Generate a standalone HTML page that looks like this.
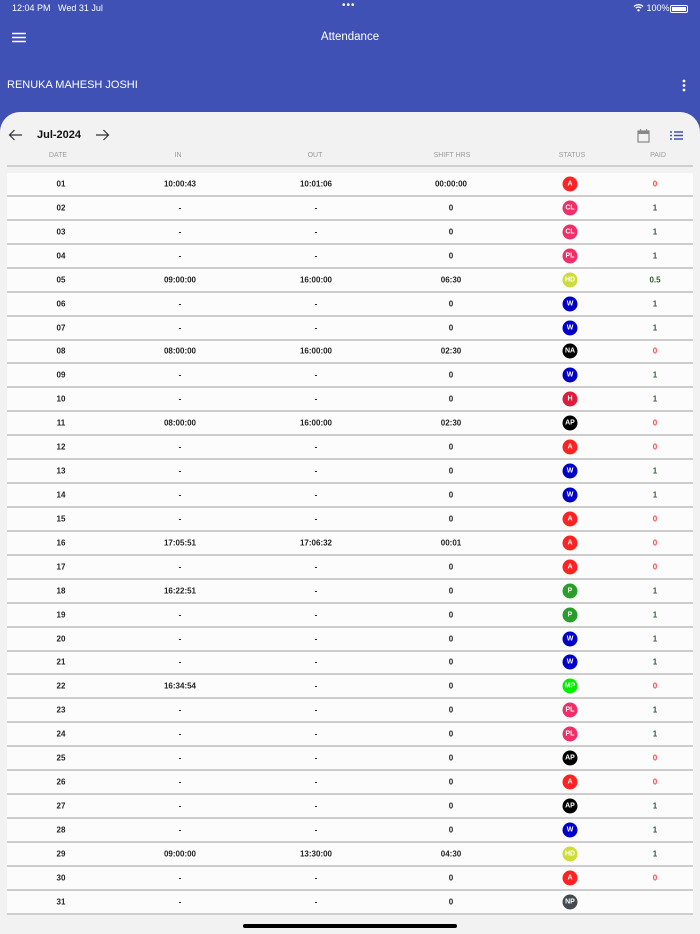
<!DOCTYPE html>
<html><head><meta charset="utf-8">
<style>
*{margin:0;padding:0;box-sizing:border-box}
body{width:700px;height:934px;overflow:hidden;background:#3f51b5;font-family:"Liberation Sans",sans-serif;position:relative}
.sb{position:absolute;top:3px;color:#fff;font-size:9px}
.card{position:absolute;left:0;top:112px;width:700px;height:822px;background:#f2f2f2;border-radius:20px 20px 0 0}
.hd{position:absolute;top:152px;font-size:7px;color:#999;letter-spacing:0;transform:translateX(-50%)}
.hline{position:absolute;left:7px;width:686px;top:165px;height:2px;background:#cfcfcf}
.rows{position:absolute;left:7px;top:173px;width:686px}
.r{height:23.93px;border-bottom:2px solid #cdcdcd;background:#fcfcfc;position:relative;font-size:8px;font-weight:bold;color:#222}
.r span{position:absolute;top:50%;transform:translate(-50%,-50%)}
.b{width:15px;height:15px;border-radius:50%;color:#fff;font-size:7px;display:flex;align-items:center;justify-content:center}
.z{color:#f44}.o{color:#2f5f2f}
</style></head><body>
<div class="sb" style="left:12px">12:04 PM&nbsp;&nbsp; Wed 31 Jul</div>
<div class="sb" style="left:342px;top:0;font-size:10px;letter-spacing:1px">•••</div>
<div class="sb" style="left:633px">
<svg width="11" height="9" viewBox="0 0 11 9" style="vertical-align:-1px"><path d="M1 3.5a6.5 6.5 0 0 1 9 0M2.7 5.2a4 4 0 0 1 5.6 0" stroke="#fff" stroke-width="1.3" fill="none"/><circle cx="5.5" cy="7.3" r="1.2" fill="#fff"/></svg> 100%</div>
<div style="position:absolute;left:670px;top:5px;width:18px;height:8px;border:1px solid #fff;border-radius:2px;padding:1px"><div style="background:#fff;width:100%;height:100%"></div></div>
<svg style="position:absolute;left:12px;top:32px" width="14" height="11"><path d="M0 1.5h14M0 5.5h14M0 9.5h14" stroke="#fff" stroke-width="1.6"/></svg>
<div style="position:absolute;left:0;width:700px;top:31px;text-align:center;color:#fff;font-size:11.5px">Attendance</div>
<div style="position:absolute;left:7px;top:79px;color:#fff;font-size:11px">RENUKA MAHESH JOSHI</div>
<svg style="position:absolute;left:682px;top:79px" width="4" height="13"><circle cx="2" cy="2" r="1.4" fill="#fff"/><circle cx="2" cy="6.5" r="1.4" fill="#fff"/><circle cx="2" cy="11" r="1.4" fill="#fff"/></svg>
<div class="card"></div>
<svg style="position:absolute;left:8px;top:129px" width="14" height="12"><path d="M14 6H1.5M6.5 1 1.5 6l5 5" stroke="#333" stroke-width="1.2" fill="none"/></svg>
<div style="position:absolute;left:37px;top:129px;font-size:11px;font-weight:bold;color:#111">Jul-2024</div>
<svg style="position:absolute;left:96px;top:129px" width="14" height="12"><path d="M0 6h12.5M7.5 1l5 5-5 5" stroke="#333" stroke-width="1.2" fill="none"/></svg>
<svg style="position:absolute;left:637px;top:128px" width="13" height="15"><rect x="1" y="3" width="11" height="11" fill="none" stroke="#888" stroke-width="1.2"/><rect x="1" y="3" width="11" height="3" fill="#888"/><path d="M3.5 1v3M9.5 1v3" stroke="#888" stroke-width="1.2"/></svg>
<svg style="position:absolute;left:670px;top:131px" width="13" height="9"><path d="M0 1h2M4 1h9M0 4.5h2M4 4.5h9M0 8h2M4 8h9" stroke="#3f51b5" stroke-width="1.4"/></svg>
<div class="hd" style="left:58px">DATE</div>
<div class="hd" style="left:178px">IN</div>
<div class="hd" style="left:315px">OUT</div>
<div class="hd" style="left:452px">SHIFT HRS</div>
<div class="hd" style="left:572px">STATUS</div>
<div class="hd" style="left:658px">PAID</div>
<div class="hline"></div>
<div class="rows">
<div class="r"><span style="left:54px">01</span><span style="left:173px">10:00:43</span><span style="left:309px">10:01:06</span><span style="left:444px">00:00:00</span><span style="left:563px" class="b" ><i class="b" style="background:#f22;font-style:normal">A</i></span><span style="left:648px" class="z">0</span></div>
</div>
<div class="rows" id="R" style="top:197px"></div>
<div style="position:absolute;left:243px;top:924px;width:214px;height:4px;border-radius:2px;background:#000"></div>
<script>
var d=[
["02","-","-","0","CL","#ef2e6a","1"],["03","-","-","0","CL","#ef2e6a","1"],["04","-","-","0","PL","#ef2e6a","1"],
["05","09:00:00","16:00:00","06:30","HD","#cddc39","0.5"],["06","-","-","0","W","#0000c8","1"],["07","-","-","0","W","#0000c8","1"],
["08","08:00:00","16:00:00","02:30","NA","#000","0"],["09","-","-","0","W","#0000c8","1"],["10","-","-","0","H","#dc1e3c","1"],
["11","08:00:00","16:00:00","02:30","AP","#000","0"],["12","-","-","0","A","#f22","0"],["13","-","-","0","W","#0000c8","1"],
["14","-","-","0","W","#0000c8","1"],["15","-","-","0","A","#f22","0"],["16","17:05:51","17:06:32","00:01","A","#f22","0"],
["17","-","-","0","A","#f22","0"],["18","16:22:51","-","0","P","#2a9d2a","1"],["19","-","-","0","P","#2a9d2a","1"],
["20","-","-","0","W","#0000c8","1"],["21","-","-","0","W","#0000c8","1"],["22","16:34:54","-","0","MP","#00ee00","0"],
["23","-","-","0","PL","#ef2e6a","1"],["24","-","-","0","PL","#ef2e6a","1"],["25","-","-","0","AP","#000","0"],
["26","-","-","0","A","#f22","0"],["27","-","-","0","AP","#000","1"],["28","-","-","0","W","#0000c8","1"],
["29","09:00:00","13:30:00","04:30","HD","#cddc39","1"],["30","-","-","0","A","#f22","0"],["31","-","-","0","NP","#454a50",""]];
var h="";d.forEach(function(x){h+='<div class="r"><span style="left:54px">'+x[0]+'</span><span style="left:173px">'+x[1]+'</span><span style="left:309px">'+x[2]+'</span><span style="left:444px">'+x[3]+'</span><span style="left:563px" class="b"><i class="b" style="background:'+x[5]+';font-style:normal">'+x[4]+'</i></span><span style="left:648px" class="'+(x[6]=="0"?"z":"o")+'">'+x[6]+'</span></div>';});
document.getElementById("R").innerHTML=h;
</script>
</body></html>
